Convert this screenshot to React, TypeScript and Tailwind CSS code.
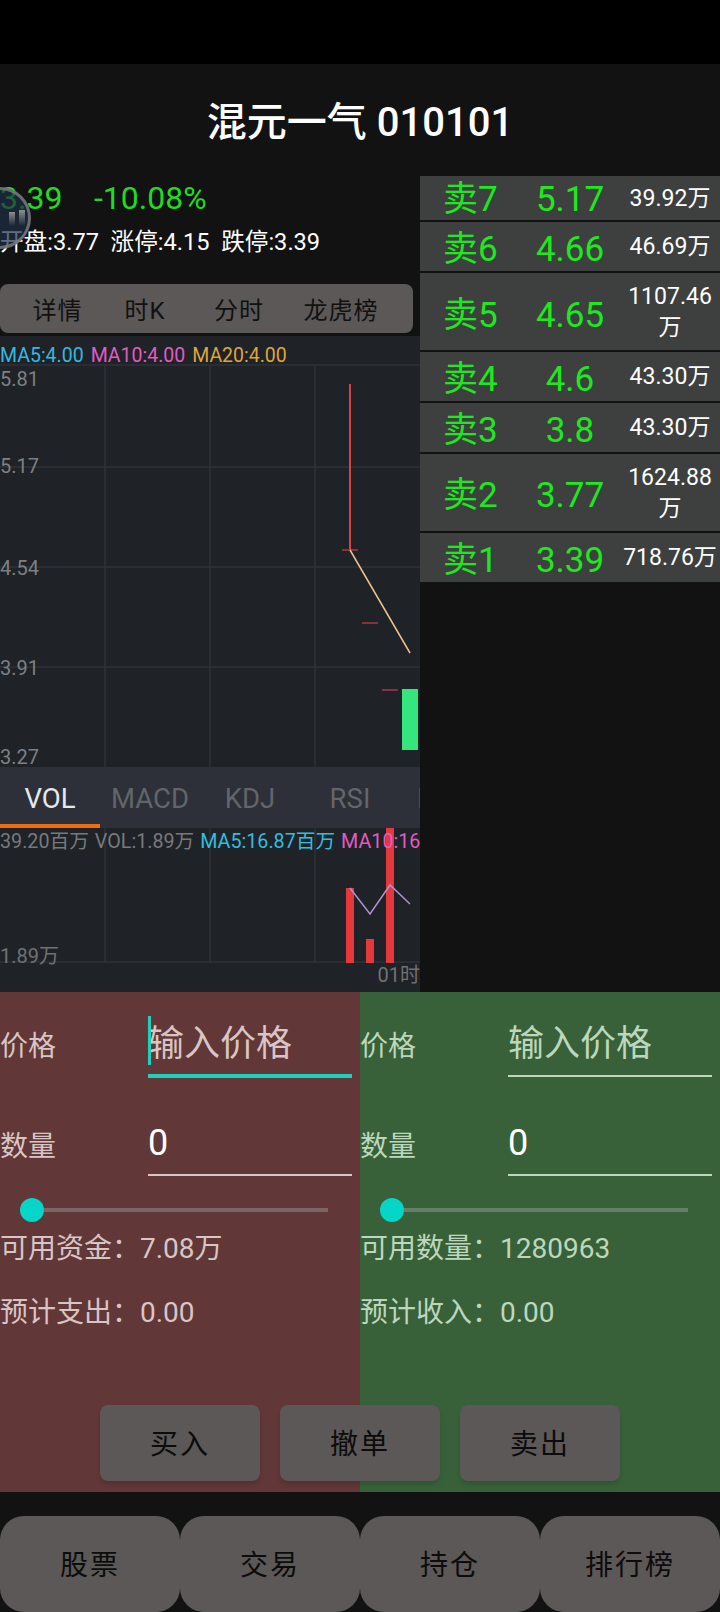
const sellRows = [
  { label: "卖7", price: "5.17", vol: ["39.92万"], h: "h-[44px]", pt: "pt-[4px]" },
  { label: "卖6", price: "4.66", vol: ["46.69万"], h: "h-[49px]", pt: "pt-[8px]" },
  { label: "卖5", price: "4.65", vol: ["1107.46", "万"], h: "h-[77px]", pt: "pt-[9px]" },
  { label: "卖4", price: "4.6", vol: ["43.30万"], h: "h-[49px]", pt: "pt-[7px]" },
  { label: "卖3", price: "3.8", vol: ["43.30万"], h: "h-[49px]", pt: "pt-[8px]" },
  { label: "卖2", price: "3.77", vol: ["1624.88", "万"], h: "h-[77px]", pt: "pt-[8px]" },
  { label: "卖1", price: "3.39", vol: ["718.76万"], h: "h-[49px]", pt: "pt-[8px]" },
];

const FONT = "font-['Roboto','Noto_Sans_CJK_SC',sans-serif]";

function FormSide({
  bg,
  soft,
  line,
  track,
  focused,
  avail,
  spend,
}: {
  bg: string;
  soft: string;
  line: string;
  track: string;
  focused?: boolean;
  avail: string;
  spend: string;
}) {
  return (
    <div className={`w-[360px] h-[500px] ${bg} ${soft} flex flex-col`}>
      <div className="flex h-[98px] pt-[25px]">
        <div className="w-[148px] text-[28px] leading-[60px]">价格</div>
        <div className={`relative w-[204px] ${focused ? "h-[61px] border-b-4 border-[#1dd1bd]" : `h-[60px] border-b-2 ${line}`}`}>
          <span className="absolute left-0 top-[-2px] text-[36px] leading-[58px]">输入价格</span>
          {focused && <span className="absolute left-0 top-[-1px] w-[3px] h-[49px] bg-[#1dd1bd]" />}
        </div>
      </div>
      <div className="flex h-[100px] pt-[28px]">
        <div className="w-[148px] text-[28px] leading-[58px]">数量</div>
        <div className={`relative w-[204px] h-[58px] border-b-2 ${line}`}>
          <span className="absolute left-0 top-0 text-[36px] leading-[50px] text-white">0</span>
        </div>
      </div>
      <div className="flex items-center h-[24px] mt-[8px] pl-[20px]">
        <span className="w-[24px] h-[24px] rounded-full bg-[#05d6c8]" />
        <span className={`w-[284px] h-[4px] ${track}`} />
      </div>
      <div className="flex h-[50px] items-center mt-[2px] text-[28px] leading-none">
        <span>{avail}</span>
      </div>
      <div className="flex h-[50px] items-center mt-[14px] text-[28px] leading-none">
        <span>{spend}</span>
      </div>
    </div>
  );
}

export default function App() {
  return (
    <div className={`w-[720px] h-[1612px] overflow-hidden bg-[#121212] flex flex-col ${FONT}`}>
      <div className="h-[64px] bg-black shrink-0" />
      <div className="h-[112px] shrink-0 flex justify-center pt-[36px] text-white text-[40px] font-medium leading-[46px]">
        混元一气 010101
      </div>

      <div className="flex h-[816px] shrink-0">
        {/* left column */}
        <div className="w-[420px] shrink-0 relative">
          <div className="h-[108px]">
            <div className="flex text-[32px] leading-[44px] text-[#1fdc22]">
              <span className="w-[94px]">3.39</span>
              <span>-10.08%</span>
            </div>
            <div className="text-white text-[23.6px] leading-[36px] mt-[4px] whitespace-pre">开盘:3.77  涨停:4.15  跌停:3.39</div>
          </div>

          {/* floating ball */}
          <div className="absolute left-[-31px] top-[11px] w-[62px] h-[62px] rounded-full bg-[#1e2d45]/70 border-[3px] border-[#7d8083]/80 flex items-center justify-end pr-[3px] gap-[4px]">
            <span className="w-[6px] h-[14px] mt-[2px] bg-linear-to-b from-[#8d9092] to-transparent" />
            <span className="w-[6px] h-[16px] bg-linear-to-b from-[#8d9092] to-transparent" />
          </div>

          <div className="h-[49px] w-[413px] rounded-lg bg-[#5b5857] flex text-[24px] text-[#111] leading-[55px] tracking-[1px]">
            <span className="w-[115px] text-center">详情</span>
            <span className="w-[60px] text-center">时K</span>
            <span className="w-[120px] text-center ml-[4px]">分时</span>
            <span className="w-[84px] text-center whitespace-nowrap">龙虎榜</span>
          </div>

          {/* kline */}
          <div className="relative mt-[3px] h-[431px] bg-[#1f2226] overflow-hidden">
            <div className="absolute left-0 top-[6px] flex gap-[7px] text-[19.5px] leading-[28px] whitespace-nowrap">
              <span className="text-[#35b9e0]">MA5:4.00</span>
              <span className="text-[#e05cc4]">MA10:4.00</span>
              <span className="text-[#dda63a]">MA20:4.00</span>
            </div>
            <svg className="absolute left-0 top-0" width="420" height="431">
              <g stroke="#2f3338" strokeWidth="1.5" fill="none">
                <path d="M0 29H420M0 131H420M0 231H420M0 331H420" />
                <path d="M105 29V431M210 29V431M315 29V431" />
              </g>
              <path d="M350 48V214" stroke="#d9404a" strokeWidth="2" />
              <path d="M342 214H358M362 287H378M382 354H398" stroke="#a8383f" strokeWidth="1.5" />
              <path d="M350 214L410 317" stroke="#e8c48e" strokeWidth="1.5" fill="none" />
              <rect x="402" y="353" width="16" height="61" fill="#35e57e" />
            </svg>
            {[
              ["5.81", "top-[33px]"],
              ["5.17", "top-[120px]"],
              ["4.54", "top-[222px]"],
              ["3.91", "top-[322px]"],
              ["3.27", "top-[411px]"],
            ].map(([t, pos]) => (
              <span key={t} className={`absolute left-0 ${pos} text-[20px] leading-[20px] text-[#7d8083]`}>
                {t}
              </span>
            ))}
          </div>

          {/* indicator tabs */}
          <div className="relative h-[61px] bg-[#2d3038] overflow-hidden text-[27.5px] leading-[63px] text-[#62656a] flex">
            <span className="w-[100px] shrink-0 text-center text-[#e6e8ea]">VOL</span>
            <span className="w-[100px] shrink-0 text-center">MACD</span>
            <span className="w-[100px] shrink-0 text-center">KDJ</span>
            <span className="w-[100px] shrink-0 text-center">RSI</span>
            <span className="w-[100px] shrink-0 text-center">BOLL</span>
            <span className="absolute left-0 bottom-0 w-[100px] h-[4px] bg-[#ee6c12]" />
          </div>

          {/* volume */}
          <div className="relative h-[164px] bg-[#1f2226] overflow-hidden">
            <svg className="absolute left-0 top-0" width="420" height="164">
              <path d="M0 134H420M105 0V134M210 0V134M315 0V134" stroke="#2f3338" strokeWidth="1.5" fill="none" />
              <rect x="346" y="60" width="8" height="75" fill="#e5383c" />
              <rect x="366" y="111" width="8" height="24" fill="#e5383c" />
              <rect x="386" y="0" width="8" height="135" fill="#e5383c" />
              <path d="M350 60L370 86L390 57L410 76" stroke="#b48fd0" strokeWidth="1.5" fill="none" />
            </svg>
            <div className="absolute left-0 top-0 flex gap-[6px] text-[19.7px] leading-[28px] whitespace-nowrap text-[#777a7d]">
              <span>39.20百万</span>
              <span>VOL:1.89万</span>
              <span className="text-[#2fbfe0]">MA5:16.87百万</span>
              <span className="text-[#e05cc4]">MA10:16.87百万</span>
            </div>
            <span className="absolute left-0 bottom-[24px] text-[20px] leading-[24px] text-[#6f7275]">1.89万</span>
            <span className="absolute right-0 bottom-[5px] text-[20px] leading-[24px] text-[#6f7275]">01时</span>
          </div>
        </div>

        {/* sell list */}
        <div className="w-[300px] flex flex-col gap-[2px]">
          {sellRows.map((row) => (
            <div key={row.label} className={`${row.h} bg-[#3d403f] flex items-center`}>
              <span className={`w-[100px] pl-[23px] ${row.pt} text-[35px] text-[#1ee81e] whitespace-nowrap`}>{row.label}</span>
              <span className={`w-[100px] ${row.pt} text-center text-[35px] text-[#1ee81e]`}>{row.price}</span>
              <span className="w-[100px] text-center text-[23px] leading-[31px] text-white">
                {row.vol.map((v) => (
                  <div key={v} className="whitespace-nowrap">{v}</div>
                ))}
              </span>
            </div>
          ))}
        </div>
      </div>

      {/* trade form */}
      <div className="relative flex shrink-0">
        <FormSide
          bg="bg-[#613737]"
          soft="text-[#d9c5c5]"
          line="border-[#d9c5c5]"
          track="bg-[#7e6565]"
          focused
          avail="可用资金：7.08万"
          spend="预计支出：0.00"
        />
        <FormSide
          bg="bg-[#38613a]"
          soft="text-[#bdd7bd]"
          line="border-[#bdd7bd]"
          track="bg-[#658065]"
          avail="可用数量：1280963"
          spend="预计收入：0.00"
        />
        <div className="absolute left-[100px] top-[413px] flex gap-[20px] text-[28px] text-[#0c0c0c]">
          {["买入", "撤单", "卖出"].map((t) => (
            <div key={t} className="w-[160px] h-[76px] pt-[3px] rounded-lg bg-[#5b5857] shadow-md flex items-center justify-center tracking-[2px]">
              {t}
            </div>
          ))}
        </div>
      </div>

      {/* bottom nav */}
      <div className="flex mt-[24px]">
        {["股票", "交易", "持仓", "排行榜"].map((t) => (
          <div key={t} className="w-[180px] h-[96px] pt-[4px] rounded-[24px] bg-[#5b5857] flex items-center justify-center text-[28px] text-[#0c0c0c] tracking-[2px]">
            {t}
          </div>
        ))}
      </div>
    </div>
  );
}
